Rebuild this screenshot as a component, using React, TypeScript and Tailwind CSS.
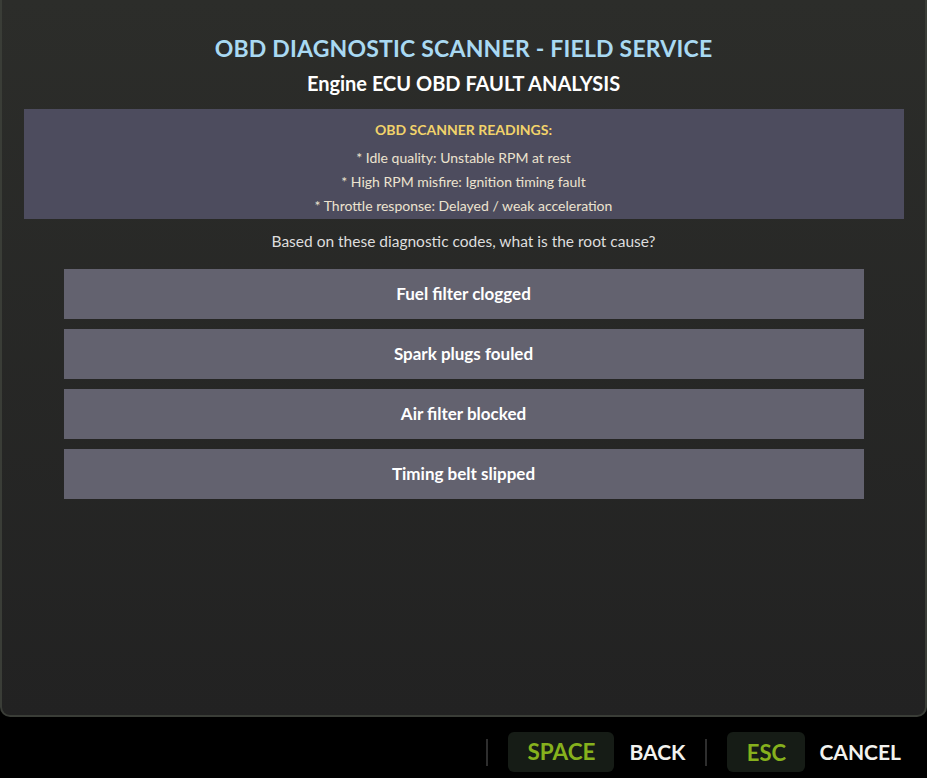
export default function App() {
  const readings = [
    '* Idle quality: Unstable RPM at rest',
    '* High RPM misfire: Ignition timing fault',
    '* Throttle response: Delayed / weak acceleration',
  ];
  const options = ['Fuel filter clogged', 'Spark plugs fouled', 'Air filter blocked', 'Timing belt slipped'];

  return (
    <div className="w-[927px] h-[778px] bg-black flex flex-col font-['Lato',sans-serif] overflow-hidden">
      <div className="h-[717px] shrink-0 rounded-b-[10px] border-x-2 border-b-2 border-[#3a3d37] bg-gradient-to-b from-[#2c2d2a] to-[#222222] flex flex-col items-center pt-[34px]">
        <h1 className="text-[23px] leading-[28px] font-bold text-[#a9d9f2] tracking-[0.2px]">
          OBD DIAGNOSTIC SCANNER - FIELD SERVICE
        </h1>
        <h2 className="mt-[9px] text-[20px] leading-[24px] font-bold text-white">Engine ECU OBD FAULT ANALYSIS</h2>

        <div className="mt-[14px] w-[880px] h-[110px] bg-[#4d4c5e] flex flex-col items-center pt-[12px]">
          <div className="text-[14px] leading-[18px] font-bold text-[#f2d36a]">OBD SCANNER READINGS:</div>
          <div className="mt-[10px] flex flex-col items-center gap-[6px]">
            {readings.map((r) => (
              <div key={r} className="text-[14px] leading-[18px] text-[#ece3cf]">
                {r}
              </div>
            ))}
          </div>
        </div>

        <p className="mt-[12px] text-[15.5px] leading-[20px] text-[#dedede]">
          Based on these diagnostic codes, what is the root cause?
        </p>

        <div className="mt-[18px] w-[800px] flex flex-col gap-[10px]">
          {options.map((o) => (
            <button
              key={o}
              className="h-[50px] w-full bg-[#63626f] text-white text-[17px] font-bold flex items-center justify-center"
            >
              {o}
            </button>
          ))}
        </div>
      </div>

      <div className="flex-1 flex items-center justify-end pr-[26px] pt-[9px]">
        <div className="w-[2px] h-[27px] bg-[#2e2e2e] mr-[20px]" />
        <div className="h-[40px] w-[106px] rounded-[6px] bg-[#161c16] flex items-center justify-center text-[22.5px] font-bold text-[#86b11d]">
          SPACE
        </div>
        <span className="ml-[15px] text-[21px] font-bold text-[#f2f2ee]">BACK</span>
        <div className="w-[2px] h-[27px] bg-[#2e2e2e] mx-[20px]" />
        <div className="h-[40px] w-[78px] rounded-[6px] bg-[#161c16] flex items-center justify-center text-[22px] font-bold text-[#86b11d]">
          ESC
        </div>
        <span className="ml-[14px] text-[21px] font-bold text-[#f2f2ee]">CANCEL</span>
      </div>
    </div>
  );
}
